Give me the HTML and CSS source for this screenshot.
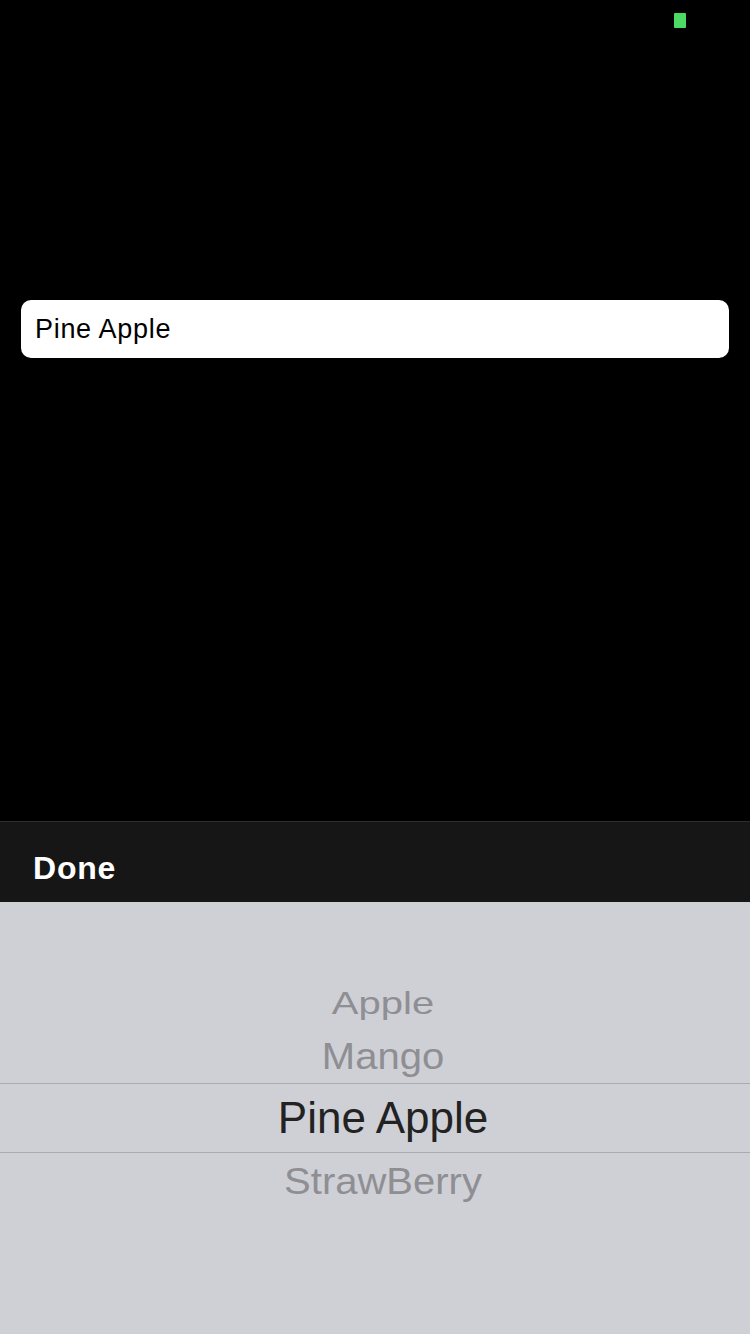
FILE: index.html
```html
<!DOCTYPE html>
<html>
<head>
<meta charset="utf-8">
<link rel="stylesheet" href="styles.css">
</head>
<body>
<div class="screen">
  <div class="status"><span class="battery"></span></div>
  <div class="content">
    <div class="field">Pine Apple</div>
  </div>
  <div class="toolbar"><span class="done">Done</span></div>
  <div class="picker">
    <div class="row r-far"><span>Apple</span></div>
    <div class="row r-near"><span>Mango</span></div>
    <div class="row selected"><span>Pine Apple</span></div>
    <div class="row r-below"><span>StrawBerry</span></div>
  </div>
</div>
</body>
</html>
```
FILE: styles.css
```css
html, body {
  margin: 0;
  padding: 0;
  background: #000;
}
.screen {
  width: 750px;
  height: 1334px;
  display: flex;
  flex-direction: column;
  font-family: "Liberation Sans", Arial, sans-serif;
  overflow: hidden;
}
.status {
  height: 40px;
  display: flex;
  justify-content: flex-end;
  padding: 13px 64px 0 0;
  box-sizing: border-box;
}
.battery {
  width: 12px;
  height: 15px;
  background: #4cd964;
  border-radius: 1px;
}
.content {
  flex: 1;
  padding: 260px 21px 0 21px;
}
.field {
  height: 58px;
  background: #fff;
  border-radius: 10px;
  display: flex;
  align-items: center;
  padding: 1px 0 0 14px;
  box-sizing: border-box;
  font-size: 27px;
  letter-spacing: 0.7px;
  color: #000;
}
.toolbar {
  height: 80px;
  background: #161616;
  border-top: 1px solid #2e2e2e;
  display: flex;
  align-items: center;
  padding-left: 33px;
}
.done {
  color: #fff;
  font-weight: bold;
  font-size: 32px;
  letter-spacing: 0.8px;
  padding-top: 12px;
}
.picker {
  height: 432px;
  background: #ced0d6;
  display: flex;
  flex-direction: column;
  padding: 80px 0 0 16px;
  box-sizing: border-box;
}
.row {
  display: flex;
  justify-content: center;
  align-items: center;
  color: #8e8e93;
  font-size: 40px;
  box-sizing: border-box;
}
.row span {
  display: block;
  line-height: 1;
}
.r-far {
  height: 41px;
}
.r-far span {
  transform: scaleY(0.77);
}
.r-near {
  height: 60px;
  padding-top: 6px;
}
.r-near span {
  transform: scaleY(0.94);
}
.selected {
  height: 70px;
  margin-left: -16px;
  padding-left: 16px;
  border-top: 1px solid #a9abb0;
  border-bottom: 1px solid #a9abb0;
  color: #222;
  font-size: 44px;
}
.r-below {
  height: 56px;
}
.r-below span {
  transform: scaleY(0.91);
}
```
